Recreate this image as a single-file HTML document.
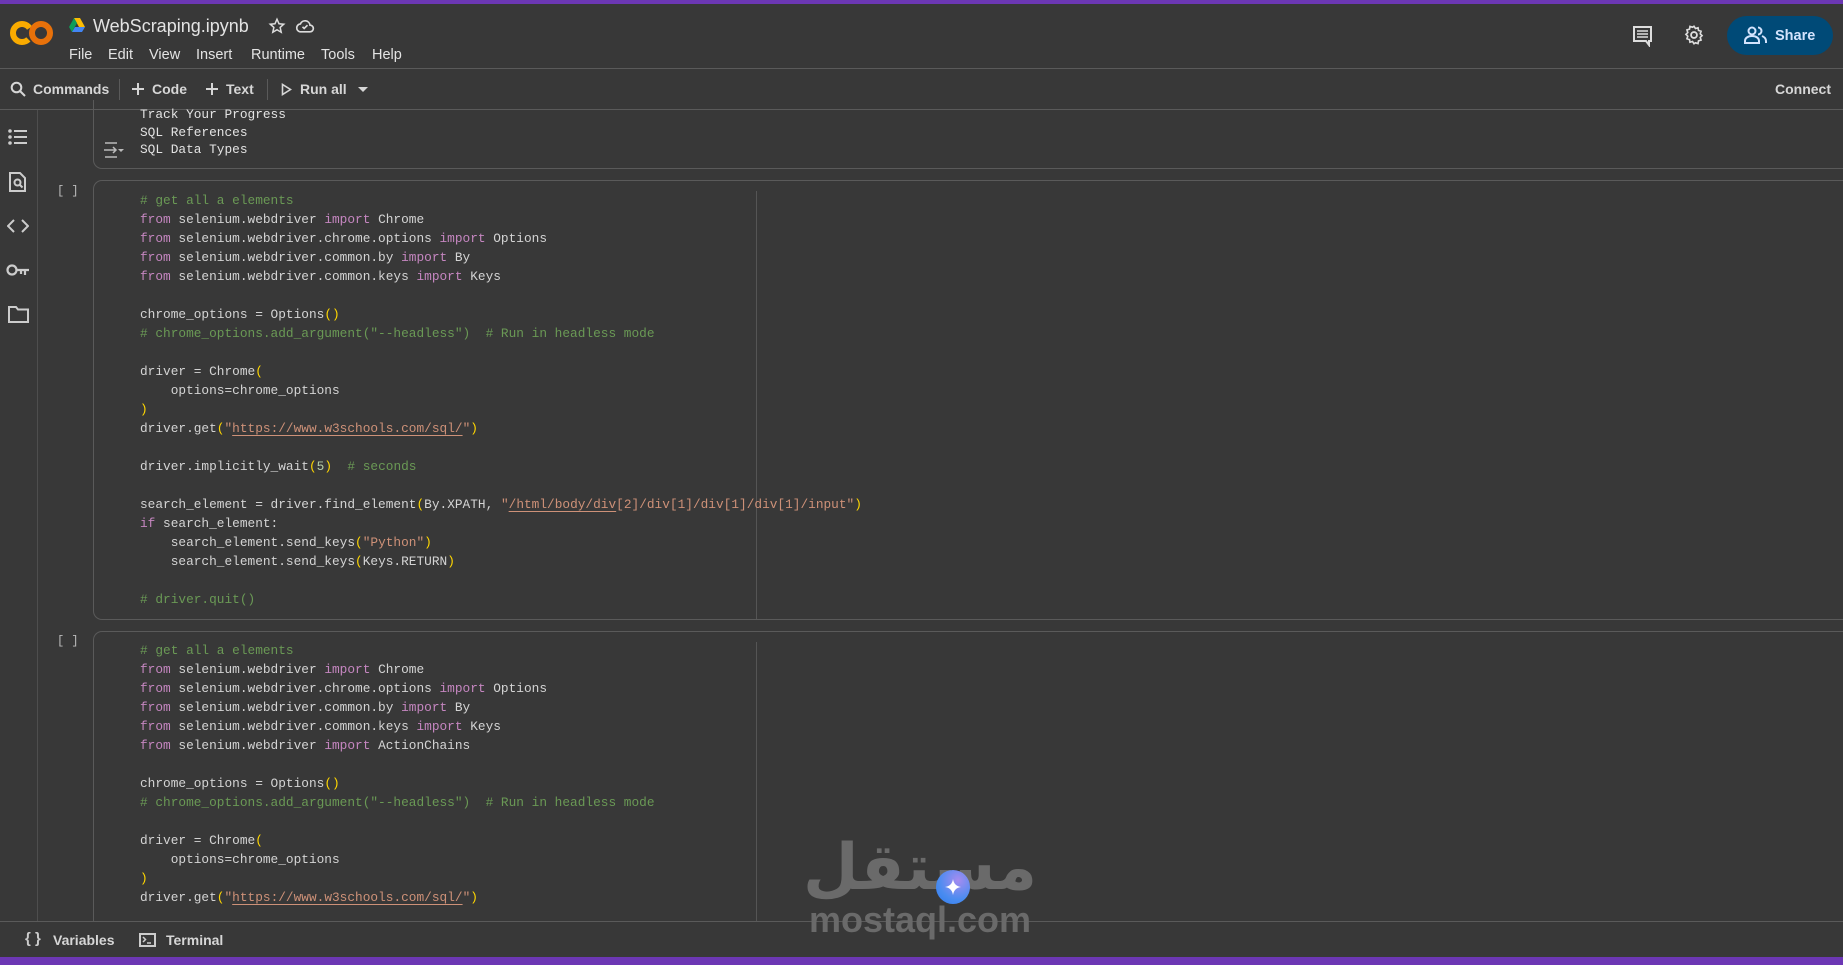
<!DOCTYPE html>
<html><head><meta charset="utf-8"><style>
*{margin:0;padding:0;box-sizing:border-box}
html,body{width:1843px;height:965px;overflow:hidden;background:#383838;font-family:"Liberation Sans",sans-serif;color:#e3e3e3}
.abs{position:absolute}
#top{left:0;top:0;width:1843px;height:4px;background:#6c37b4}
#bot{left:0;top:957px;width:1843px;height:8px;background:#6c37b4}
.hl{height:1px;background:#5a5a5a;left:0;width:1843px}
.menu span{position:absolute;top:47px;font-size:14.5px;color:#e3e3e3}
.tb{position:absolute;top:81px;font-size:14px;font-weight:bold;color:#d6d6d6}
.code{position:absolute;left:140px;font-family:"Liberation Mono",monospace;font-size:12.8px;line-height:19px;color:#d4d4d4;white-space:pre}
.k{color:#c586c0}.c{color:#6a9955}.s{color:#ce9178}.p{color:#ffd700}.n{color:#b5cea8}
.u{text-decoration:underline;text-underline-offset:3px}
.cell{position:absolute;left:93px;width:1800px;border:1px solid #5a5a5a;border-right:none;border-radius:9px 0 0 9px}
.vd{position:absolute;left:756px;width:1px;background:#555}
svg{position:absolute}
</style></head><body>
<div id="top" class="abs"></div>
<svg style="left:10px;top:19px" width="44" height="28" viewBox="0 0 44 28"><circle cx="12" cy="14" r="9" fill="none" stroke="#f9ab00" stroke-width="6" stroke-dasharray="44 20" transform="rotate(45 12 14)"/><circle cx="31" cy="14" r="9" fill="none" stroke="#e8710a" stroke-width="6"/></svg>
<svg style="left:69px;top:18px" width="16" height="14" viewBox="0 0 16 14"><path d="M5 0h6l5 9h-6z" fill="#fbbc04"/><path d="M5 0L0 9l3 5 5-9z" fill="#0f9d58"/><path d="M3 14h10l3-5H6z" fill="#4285f4"/></svg>
<div class="abs" style="left:93px;top:16px;font-size:18px;color:#e3e3e3">WebScraping.ipynb</div>
<svg style="left:268px;top:17px" width="18" height="18" viewBox="0 0 24 24"><path d="M12 3l2.7 6 6.3.6-4.8 4.3 1.4 6.4L12 17l-5.6 3.3 1.4-6.4L3 9.6 9.3 9z" fill="none" stroke="#ddd" stroke-width="2"/></svg>
<svg style="left:295px;top:17px" width="20" height="18" viewBox="0 0 24 20"><path d="M6 17h12a4 4 0 0 0 0-8 6 6 0 0 0-11.5-1.5A4.8 4.8 0 0 0 6 17z" fill="none" stroke="#ddd" stroke-width="2"/><path d="M9 11l2 2 4-4" fill="none" stroke="#ddd" stroke-width="2"/></svg>
<div class="menu"><span style="left:69px">File</span><span style="left:108px">Edit</span><span style="left:149px">View</span><span style="left:196px">Insert</span><span style="left:251px">Runtime</span><span style="left:321px">Tools</span><span style="left:372px">Help</span></div>
<svg style="left:1632px;top:25px" width="22" height="22" viewBox="0 0 22 22"><path d="M2 2h17v14h-2v4l-3-4H2z" fill="none" stroke="#ddd" stroke-width="2"/><path d="M5 6h11M5 9h11M5 12h11" stroke="#ddd" stroke-width="1.6"/></svg>
<svg style="left:1683px;top:24px" width="22" height="22" viewBox="0 0 24 24"><circle cx="12" cy="12" r="3.2" fill="none" stroke="#ddd" stroke-width="2"/><path d="M12 2.5l1.6 2.4 2.8-.8.5 2.9 2.8.9-.9 2.8 2 2-2 2 .9 2.8-2.8.9-.5 2.9-2.8-.8L12 21.5l-1.6-2.4-2.8.8-.5-2.9-2.8-.9.9-2.8-2-2 2-2-.9-2.8 2.8-.9.5-2.9 2.8.8z" fill="none" stroke="#ddd" stroke-width="1.8"/></svg>
<div class="abs" style="left:1727px;top:16px;width:106px;height:39px;border-radius:20px;background:#004a77"></div>
<svg style="left:1744px;top:26px" width="24" height="18" viewBox="0 0 24 18"><circle cx="8" cy="5" r="3.5" fill="none" stroke="#d3e3fd" stroke-width="2"/><path d="M1 17v-2c0-3 3-5 7-5s7 2 7 5v2z" fill="none" stroke="#d3e3fd" stroke-width="2"/><path d="M14 1.5a3.5 3.5 0 0 1 0 7M18 10c2 .8 4 2.5 4 5v2" fill="none" stroke="#d3e3fd" stroke-width="2"/></svg>
<div class="abs" style="left:1775px;top:28px;font-size:14.5px;font-weight:bold;color:#d3e3fd">Share</div>
<div class="abs hl" style="top:68px"></div>
<svg style="left:10px;top:81px" width="16" height="16" viewBox="0 0 16 16"><circle cx="6.5" cy="6.5" r="4.8" fill="none" stroke="#d6d6d6" stroke-width="2"/><path d="M10 10l5 5" stroke="#d6d6d6" stroke-width="2"/></svg>
<div class="tb" style="left:33px">Commands</div>
<div class="abs" style="left:119px;top:79px;width:1px;height:21px;background:#5a5a5a"></div>
<svg style="left:131px;top:82px" width="14" height="14" viewBox="0 0 14 14"><path d="M7 1v12M1 7h12" stroke="#d6d6d6" stroke-width="2"/></svg>
<div class="tb" style="left:152px">Code</div>
<svg style="left:205px;top:82px" width="14" height="14" viewBox="0 0 14 14"><path d="M7 1v12M1 7h12" stroke="#d6d6d6" stroke-width="2"/></svg>
<div class="tb" style="left:226px">Text</div>
<div class="abs" style="left:267px;top:79px;width:1px;height:21px;background:#5a5a5a"></div>
<svg style="left:281px;top:83px" width="11" height="13" viewBox="0 0 11 13"><path d="M1.5 1.5v10l8-5z" fill="none" stroke="#d6d6d6" stroke-width="1.6"/></svg>
<div class="tb" style="left:300px">Run all</div>
<svg style="left:358px;top:87px" width="10" height="6" viewBox="0 0 10 6"><path d="M0 0h10L5 5z" fill="#d6d6d6"/></svg>
<div class="tb" style="left:1775px">Connect</div>
<div class="abs hl" style="top:109px"></div>
<div class="abs" style="left:37px;top:110px;width:1px;height:811px;background:#4e4e4e"></div>
<svg style="left:8px;top:128px" width="20" height="18" viewBox="0 0 20 18"><g fill="#ccc"><circle cx="2" cy="3" r="1.8"/><circle cx="2" cy="9" r="1.8"/><circle cx="2" cy="15" r="1.8"/><rect x="6" y="2" width="13" height="2"/><rect x="6" y="8" width="13" height="2"/><rect x="6" y="14" width="13" height="2"/></g></svg>
<svg style="left:9px;top:172px" width="18" height="20" viewBox="0 0 18 20"><path d="M1 1h10l5 5v13H1z" fill="none" stroke="#ccc" stroke-width="2"/><circle cx="8.5" cy="10.5" r="3" fill="none" stroke="#ccc" stroke-width="2"/><path d="M10.5 12.5l3 3" stroke="#ccc" stroke-width="2"/></svg>
<svg style="left:7px;top:218px" width="22" height="16" viewBox="0 0 22 16"><path d="M7 2L1 8l6 6M15 2l6 6-6 6" fill="none" stroke="#ccc" stroke-width="2"/></svg>
<svg style="left:6px;top:263px" width="24" height="14" viewBox="0 0 24 14"><circle cx="6" cy="7" r="4.5" fill="none" stroke="#ccc" stroke-width="2.2"/><path d="M10.5 7H23M19 7v5M15 7v4" stroke="#ccc" stroke-width="2.2" fill="none"/></svg>
<svg style="left:8px;top:305px" width="21" height="18" viewBox="0 0 21 18"><path d="M1 2h7l2 2.5h10V17H1z" fill="none" stroke="#ccc" stroke-width="2"/></svg>
<div class="abs" style="left:93px;top:100px;width:1800px;height:69px;border-left:1px solid #5a5a5a;border-bottom:1px solid #5a5a5a;border-radius:0 0 0 9px"></div>
<svg style="left:103px;top:141px" width="22" height="18" viewBox="0 0 22 18"><path d="M2 2h12M2 16h12M1 9h12M10 6l3 3-3 3" fill="none" stroke="#bbb" stroke-width="1.5"/><path d="M15 8h6l-3 3z" fill="#bbb"/></svg>
<div class="code" style="top:106px;line-height:17.6px;color:#e3e3e3">Track Your Progress
SQL References
SQL Data Types</div>
<div class="abs" style="left:57px;top:184px;font-family:'Liberation Mono',monospace;font-size:12px;color:#bbb">[ ]</div>
<div class="cell" style="top:180px;height:440px"></div>
<div class="vd" style="top:191px;height:428px"></div>
<div class="code" style="top:190.5px"><span class="c"># get all a elements</span>
<span class="k">from</span> selenium.webdriver <span class="k">import</span> Chrome
<span class="k">from</span> selenium.webdriver.chrome.options <span class="k">import</span> Options
<span class="k">from</span> selenium.webdriver.common.by <span class="k">import</span> By
<span class="k">from</span> selenium.webdriver.common.keys <span class="k">import</span> Keys

chrome_options = Options<span class="p">()</span>
<span class="c"># chrome_options.add_argument("--headless")  # Run in headless mode</span>

driver = Chrome<span class="p">(</span>
    options=chrome_options
<span class="p">)</span>
driver.get<span class="p">(</span><span class="s">"<span class="u">https://www.w3schools.com/sql/</span>"</span><span class="p">)</span>

driver.implicitly_wait<span class="p">(</span><span class="n">5</span><span class="p">)</span>  <span class="c"># seconds</span>

search_element = driver.find_element<span class="p">(</span>By.XPATH, <span class="s">"<span class="u">/html/body/div</span>[2]/div[1]/div[1]/div[1]/input"</span><span class="p">)</span>
<span class="k">if</span> search_element:
    search_element.send_keys<span class="p">(</span><span class="s">"Python"</span><span class="p">)</span>
    search_element.send_keys<span class="p">(</span>Keys.RETURN<span class="p">)</span>

<span class="c"># driver.quit()</span></div>
<div class="abs" style="left:57px;top:634px;font-family:'Liberation Mono',monospace;font-size:12px;color:#bbb">[ ]</div>
<div class="cell" style="top:631px;height:320px"></div>
<div class="vd" style="top:642px;height:279px"></div>
<div class="code" style="top:640.5px"><span class="c"># get all a elements</span>
<span class="k">from</span> selenium.webdriver <span class="k">import</span> Chrome
<span class="k">from</span> selenium.webdriver.chrome.options <span class="k">import</span> Options
<span class="k">from</span> selenium.webdriver.common.by <span class="k">import</span> By
<span class="k">from</span> selenium.webdriver.common.keys <span class="k">import</span> Keys
<span class="k">from</span> selenium.webdriver <span class="k">import</span> ActionChains

chrome_options = Options<span class="p">()</span>
<span class="c"># chrome_options.add_argument("--headless")  # Run in headless mode</span>

driver = Chrome<span class="p">(</span>
    options=chrome_options
<span class="p">)</span>
driver.get<span class="p">(</span><span class="s">"<span class="u">https://www.w3schools.com/sql/</span>"</span><span class="p">)</span></div>
<div class="abs" style="left:0;top:921px;width:1843px;height:36px;background:#383838;border-top:1px solid #5a5a5a"></div>
<div class="abs" style="left:25px;top:930px;font-size:15px;font-weight:bold;color:#ccc">{ }</div>
<div class="abs" style="left:53px;top:932px;font-size:14px;font-weight:bold;color:#d6d6d6">Variables</div>
<svg style="left:139px;top:933px" width="17" height="14" viewBox="0 0 17 14"><rect x="1" y="1" width="15" height="12" fill="none" stroke="#ccc" stroke-width="2"/><path d="M4 4l2.5 2.5L4 9M8 10h4" stroke="#ccc" stroke-width="1.5" fill="none"/></svg>
<div class="abs" style="left:166px;top:932px;font-size:14px;font-weight:bold;color:#d6d6d6">Terminal</div>
<div class="abs" style="left:800px;top:822px;width:240px;text-align:center;font-family:'Noto Sans CJK SC','DejaVu Sans',sans-serif;font-size:64px;font-weight:bold;color:#6a6a6a;line-height:80px" dir="rtl">مستقل</div>
<div class="abs" style="left:936px;top:870px;width:34px;height:34px;border-radius:50%;background:radial-gradient(circle at 65% 30%,#a58cf0,#4a8cf0 60%,#2f7cf0)"></div>
<svg style="left:943px;top:877px" width="20" height="20" viewBox="0 0 20 20"><path d="M10 2Q11 9 18 10Q11 11 10 18Q9 11 2 10Q9 9 10 2z" fill="#fff"/></svg>
<div class="abs" style="left:780px;top:900px;width:280px;text-align:center;font-size:36px;font-weight:bold;color:#6a6a6a;line-height:40px">mostaql.com</div>
<div id="bot" class="abs"></div>
</body></html>
